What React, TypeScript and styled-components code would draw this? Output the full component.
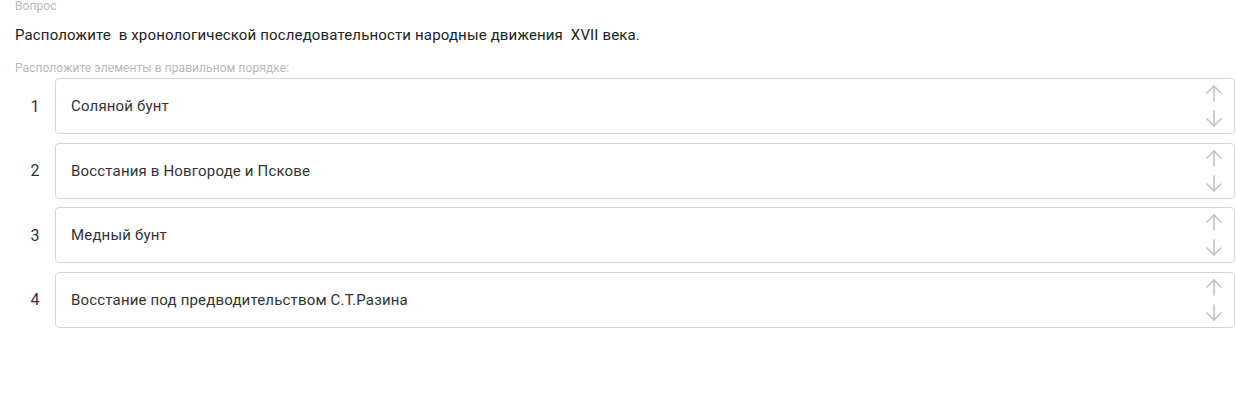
import React from "react";
import styled, { createGlobalStyle } from "styled-components";

const Global = createGlobalStyle`
  html, body { margin: 0; padding: 0; background: #fff; }
  body { font-family: Roboto, "Noto Sans", Arial, sans-serif; }
`;

const Page = styled.div`
  padding: 0 1px 0 15px;
`;

const Caption = styled.div`
  font-size: 12px;
  line-height: 13px;
  color: #b8b8b8;
  letter-spacing: 0.07px;
`;

const Question = styled.div`
  margin-top: 12px;
  font-size: 15px;
  line-height: 20px;
  color: #222;
  white-space: pre;
  letter-spacing: 0.15px;
`;

const Hint = styled(Caption)`
  margin-top: 17px;
`;

const List = styled.div`
  margin-top: 3px;
  display: flex;
  flex-direction: column;
  gap: 8.67px;
`;

const Row = styled.div`
  display: flex;
  align-items: stretch;
`;

const Num = styled.div`
  width: 40px;
  flex: none;
  display: flex;
  align-items: center;
  justify-content: center;
  font-size: 16px;
  color: #333;
`;

const Card = styled.div`
  flex: 1;
  height: 56px;
  box-sizing: border-box;
  border: 1px solid #d6d6d6;
  border-radius: 4px;
  display: flex;
  align-items: center;
  padding: 0 11px 0 15px;
  font-size: 15px;
  letter-spacing: 0.17px;
  color: #333;
`;

const Text = styled.div`
  flex: 1;
`;

const Arrows = styled.div`
  display: flex;
  flex-direction: column;
  gap: 8px;
`;

const ArrowBtn = styled.span`
  display: block;
  width: 18px;
  height: 17px;
  color: #c2c2c2;
`;

const Arrow = ({ down }: { down?: boolean }) => (
  <ArrowBtn>
    <svg width="18" height="17" viewBox="0 0 18 17" fill="none" stroke="currentColor" strokeWidth="1.6" strokeLinecap="round" strokeLinejoin="round">
      {down ? (
        <>
          <path d="M9 1v15" />
          <path d="M2 9l7 7 7-7" />
        </>
      ) : (
        <>
          <path d="M9 16V1" />
          <path d="M2 8l7-7 7 7" />
        </>
      )}
    </svg>
  </ArrowBtn>
);

const items = [
  "Соляной бунт",
  "Восстания в Новгороде и Пскове",
  "Медный бунт",
  "Восстание под предводительством С.Т.Разина",
];

export default function App() {
  return (
    <Page>
      <Global />
      <Caption>Вопрос</Caption>
      <Question>Расположите  в хронологической последовательности народные движения  XVII века.</Question>
      <Hint>Расположите элементы в правильном порядке:</Hint>
      <List>
        {items.map((t, i) => (
          <Row key={i}>
            <Num>{i + 1}</Num>
            <Card>
              <Text>{t}</Text>
              <Arrows>
                <Arrow />
                <Arrow down />
              </Arrows>
            </Card>
          </Row>
        ))}
      </List>
    </Page>
  );
}
